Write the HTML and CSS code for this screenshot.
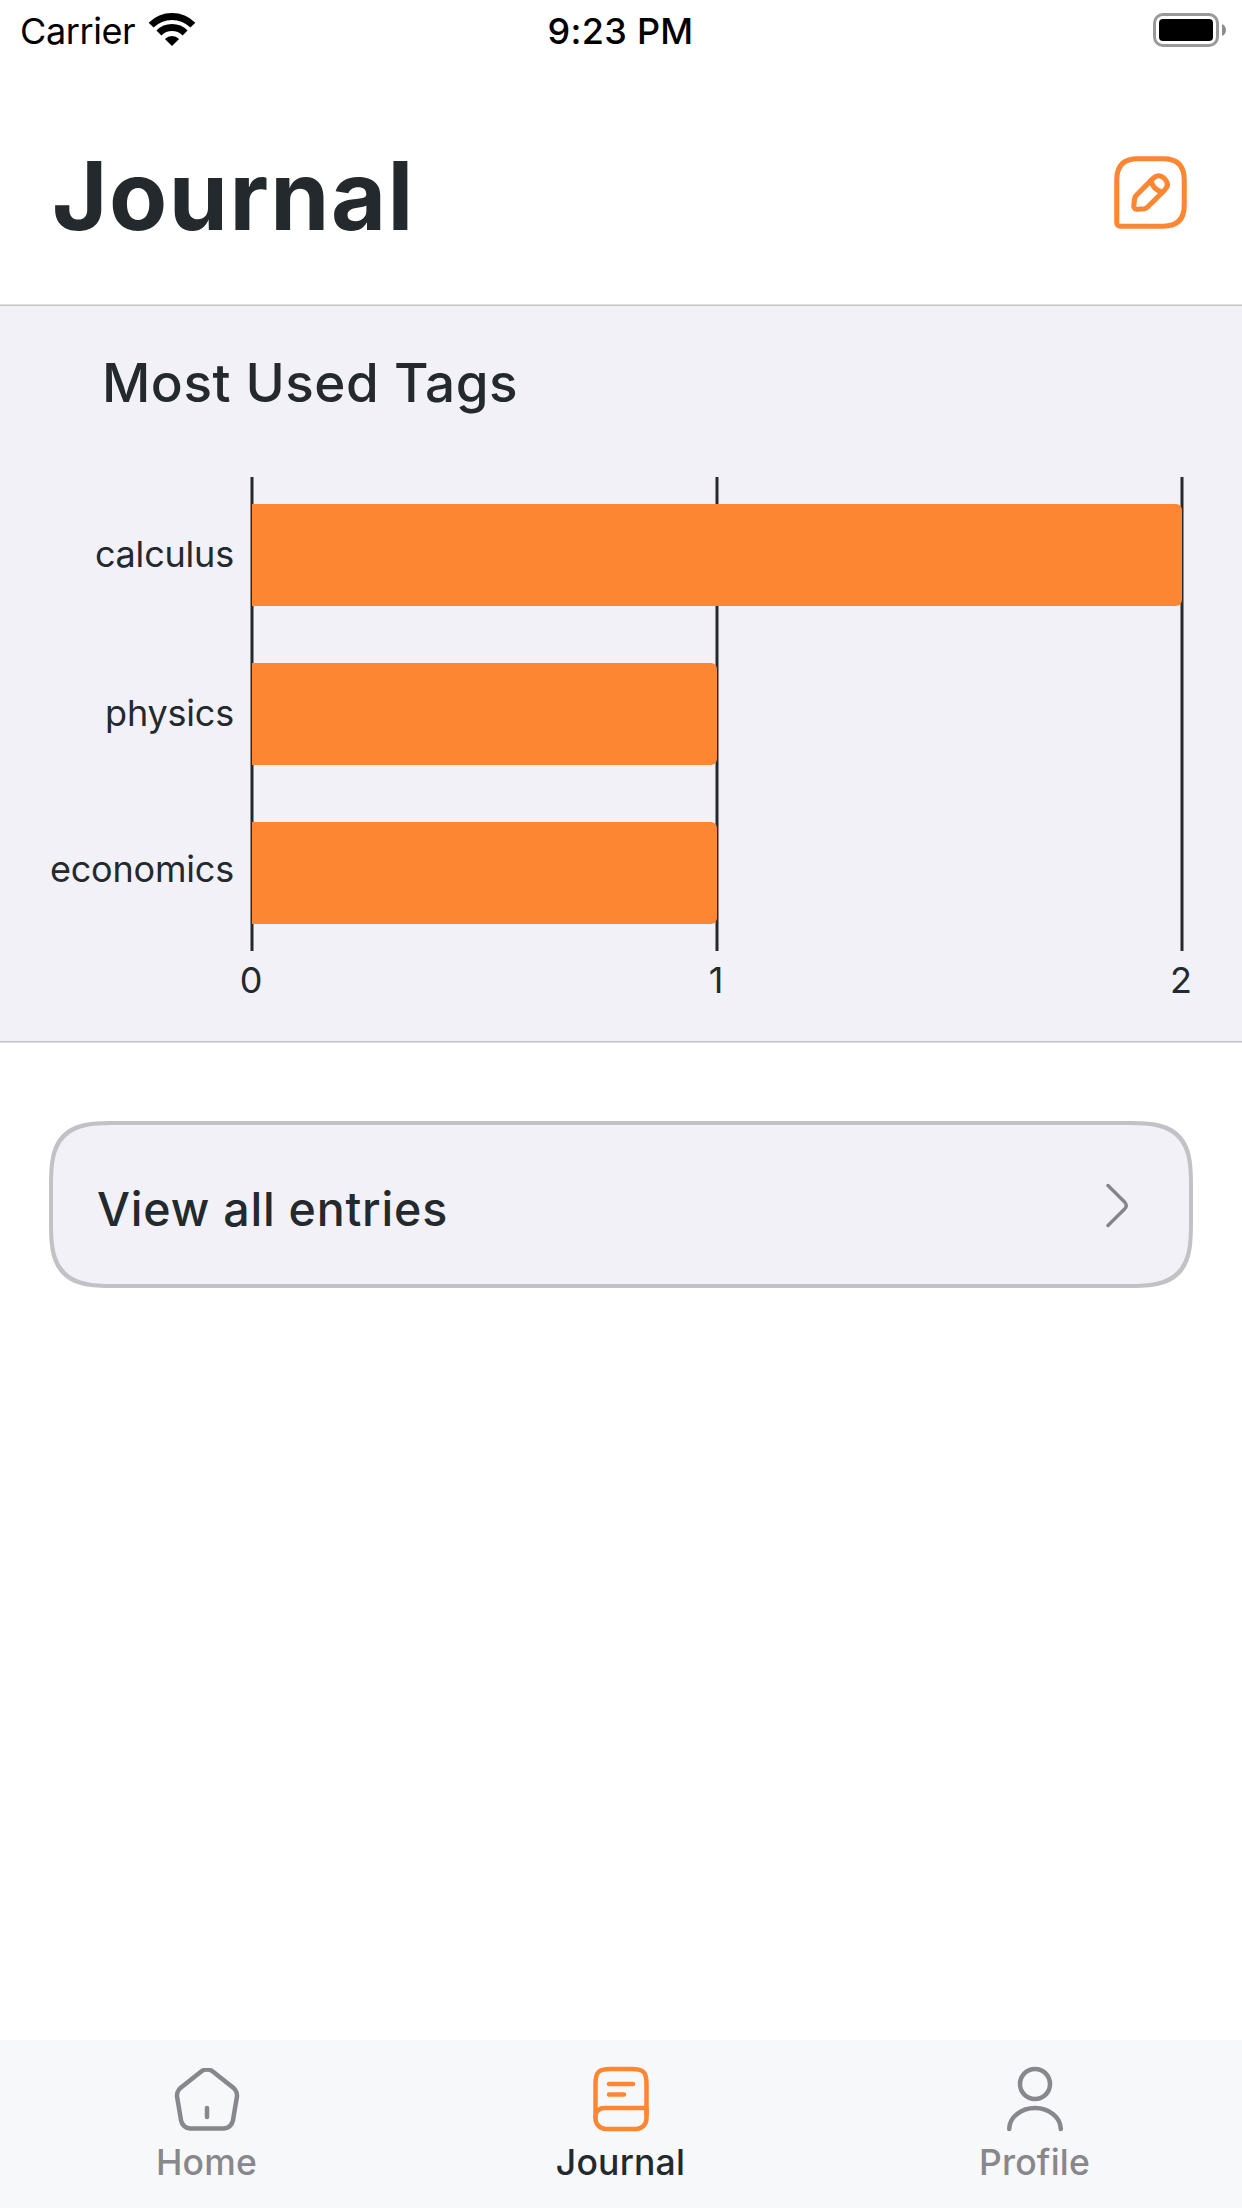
FILE: index.html
```html
<!DOCTYPE html>
<html lang="en">
<head>
<meta charset="utf-8">
<title>Journal</title>
<link rel="stylesheet" href="styles.css">
</head>
<body>
<div class="screen">
  <div class="status">
    <div class="status-left">
      <span class="carrier">Carrier</span>
      <svg class="wifi" width="48" height="36" viewBox="0 0 48 36" fill="none" stroke="#000" stroke-width="7">
        <path d="M3.14 13.14a29.5 29.5 0 0 1 41.72 0"/>
        <path d="M10.92 20.92a18.5 18.5 0 0 1 26.16 0"/>
        <path d="M24 34l-7.1-7.1a10.3 10.3 0 0 1 14.2 0z" fill="#000" stroke="none"/>
      </svg>
    </div>
    <span class="time">9:23 PM</span>
    <div class="status-right">
      <svg width="74" height="34" viewBox="0 0 74 34">
        <rect x="1.5" y="1.5" width="63" height="31" rx="8.5" fill="none" stroke="#999" stroke-width="3"/>
        <rect x="6" y="6" width="54" height="22" rx="4" fill="#000"/>
        <path d="M69 11c5.300 2 5.300 10 0 12z" fill="#8c8c8c"/>
      </svg>
    </div>
  </div>

  <header class="header">
    <h1 class="title">Journal</h1>
    <svg class="edit" width="81" height="81" viewBox="0 0 24 24" fill="none" stroke="#fd8633" stroke-width="1.5" stroke-linecap="round" stroke-linejoin="round">
      <path d="M8.200 2h7.600C19.900 2 22 4.100 22 8.200v7.600c0 4.100-2.100 6.200-6.200 6.200H3c-.55 0-1-.45-1-1V8.200C2 4.100 4.100 2 8.200 2z"/>
      <path d="M12.850 7.750L7.800 12.800c-.25.25-.45.650-.5 1L7.050 15.800c-.1.750.4 1.250 1.150 1.150l2-.15c.3-.05.700-.25.950-.5l5.050-5.050c.95-.95 1.100-2.100.100-3.200-1.150-1.250-2.400-1.350-3.450-.3z"/>
      <path d="M12.100 8.500a4.650 4.650 0 0 0 3.300 3.350"/>
    </svg>
  </header>

  <section class="panel">
    <h2 class="panel-title">Most Used Tags</h2>
    <div class="chart">
      <div class="tags">
        <span>calculus</span>
        <span>physics</span>
        <span>economics</span>
      </div>
      <div class="plot">
        <svg class="gridlines" width="936" height="474" viewBox="-3 0 936 474" stroke="#23292d" stroke-width="3">
          <path d="M0 0V474M465 0V474M930 0V474"/>
        </svg>
        <div class="bar" style="width:100%"></div>
        <div class="bar" style="width:50%"></div>
        <div class="bar" style="width:50%"></div>
      </div>
      <div class="ticks"><span>0</span><span>1</span><span>2</span></div>
    </div>
  </section>

  <main class="content">
    <a class="entry-link">
      <span>View all entries</span>
      <svg width="24" height="46" viewBox="0 0 24 46" fill="none" stroke="#858589" stroke-width="3.400" stroke-linecap="round">
        <path d="M2 3.500L18.800 20.300Q21.800 23.500 18.800 26.700L2 43.500"/>
      </svg>
    </a>
  </main>

  <nav class="tabs">
    <a class="tab">
      <svg width="72" height="72" viewBox="0 0 24 24" fill="none" stroke="#87878c" stroke-width="1.5" stroke-linecap="round" stroke-linejoin="round">
        <clipPath id="roof"><path d="M0 1.700h24V24H0z"/></clipPath>
        <path d="M12 18v-3"/>
        <path clip-path="url(#roof)" d="M10.070 2.820L3.140 8.370c-.78.620-1.280 1.930-1.110 2.910l1.330 7.960c.24 1.420 1.600 2.570 3.040 2.570h11.200c1.430 0 2.800-1.160 3.040-2.570l1.330-7.960c.16-.98-.34-2.290-1.110-2.910l-6.930-5.540c-1.070-.86-2.800-.86-3.860-.01z"/>
      </svg>
      <span>Home</span>
    </a>
    <a class="tab tab-active">
      <svg width="72" height="72" viewBox="0 0 24 24" fill="none" stroke="#fd8633" stroke-width="1.5" stroke-linecap="round" stroke-linejoin="round">
        <path d="M3.500 18V7c0-4 1-5 5-5h7c4 0 5 1 5 5v10"/>
        <path d="M6.350 15H20.500v3.500c0 1.930-1.570 3.500-3.500 3.500H7c-1.930 0-3.500-1.570-3.500-3.500v-.65C3.500 16.280 4.780 15 6.350 15z"/>
        <path d="M8 7h8M8 10.500h5"/>
      </svg>
      <span>Journal</span>
    </a>
    <a class="tab">
      <svg width="72" height="72" viewBox="0 0 24 24" fill="none" stroke="#87878c" stroke-width="1.5" stroke-linecap="round" stroke-linejoin="round">
        <circle cx="12" cy="7" r="5"/>
        <path d="M20.590 22c0-3.870-3.850-7-8.590-7s-8.590 3.130-8.590 7"/>
      </svg>
      <span>Profile</span>
    </a>
  </nav>
</div>
</body>
</html>
```
FILE: styles.css
```css
* {
  box-sizing: border-box;
}

body {
  margin: 0;
  background: #fff;
  color: #23292d;
  font-family: Inter, "Liberation Sans", sans-serif;
}

svg {
  display: block;
  flex: none;
}

.screen {
  display: flex;
  flex-direction: column;
  width: 1242px;
  height: 2208px;
}

/* Status bar */
.status {
  display: grid;
  grid-template-columns: 1fr auto 1fr;
  height: 62px;
  padding: 0 15px 0 20px;
  color: #000;
  font-size: 36px;
  line-height: 62px;
}

.status-left {
  display: flex;
  gap: 13px;
}

.carrier {
  width: 115px;
  letter-spacing: -0.4px;
}

.wifi {
  margin-top: 12px;
}

.time {
  padding-right: 6px;
  font-weight: 550;
  letter-spacing: 0.3px;
}

.status-right {
  display: flex;
  justify-content: flex-end;
  padding-top: 13px;
}

/* Header */
.header {
  display: flex;
  align-items: flex-start;
  justify-content: space-between;
  height: 243px;
  padding: 84px 51px 0 52px;
  border-bottom: 1px solid #e0e0e1;
}

.title {
  margin: 0;
  font-size: 95px;
  font-weight: 700;
  line-height: 100px;
  letter-spacing: 1.5px;
}

.edit {
  margin-top: 6px;
}

/* Chart panel */
.panel {
  height: 737px;
  padding: 47px 60px 0 0;
  border-top: 1px solid #c6c6c8;
  border-bottom: 1px solid #bfbfc4;
  background: #f2f1f7;
  box-shadow: 0 1px #e0e0e1;
}

.panel-title {
  margin: 0 0 64px 102px;
  font-size: 53px;
  font-weight: 450;
  line-height: 60px;
  letter-spacing: 0.5px;
}

.chart {
  display: grid;
  grid-template-columns: 252px 930px;
  grid-template-rows: 474px auto;
  font-size: 36px;
}

.tags {
  display: flex;
  flex-direction: column;
  align-items: flex-end;
  gap: 115px;
  padding: 55px 18px 0 0;
  line-height: 44px;
  letter-spacing: -0.2px;
}

.tags span:last-child {
  margin-top: -3px;
}

.plot {
  position: relative;
  display: flex;
  flex-direction: column;
  gap: 57px;
  padding: 27px 0;
}

.gridlines {
  position: absolute;
  top: 0;
  left: -3px;
}

.bar {
  position: relative;
  height: 102px;
  border-radius: 0 6px 6px 0;
  background: #fd8633;
}

.ticks {
  display: flex;
  grid-column: 2;
  justify-content: space-between;
  margin: 7px -29px 0 -31px;
  line-height: 44px;
}

.ticks span {
  width: 60px;
  text-align: center;
}

/* Entries link */
.content {
  flex: 1;
  padding: 79px 49px 0;
}

.entry-link {
  display: flex;
  align-items: center;
  justify-content: space-between;
  height: 167px;
  padding: 0 59px 0 44px;
  border: 4.5px solid #c2c2c6;
  border-radius: 60px;
  background: #f2f1f7;
  font-size: 46.5px;
  font-weight: 480;
  line-height: 60px;
  letter-spacing: 0.8px;
}

.entry-link span {
  padding-top: 8px;
}

@supports (corner-shape: superellipse(1.7)) {
  .entry-link {
    border-radius: 69px;
    corner-shape: superellipse(1.7);
  }
}

/* Tab bar */
.tabs {
  display: grid;
  grid-template-columns: repeat(3, 1fr);
  height: 168px;
  padding-top: 22.5px;
  background: #f7f8fa;
}

.tab {
  display: flex;
  flex-direction: column;
  align-items: center;
  gap: 6.5px;
  color: #87878c;
  font-size: 35.5px;
  font-weight: 480;
  line-height: 44px;
  letter-spacing: 0.2px;
}

.tab span {
  padding-right: 1px;
}

.tab-active {
  color: #23292d;
}
```
